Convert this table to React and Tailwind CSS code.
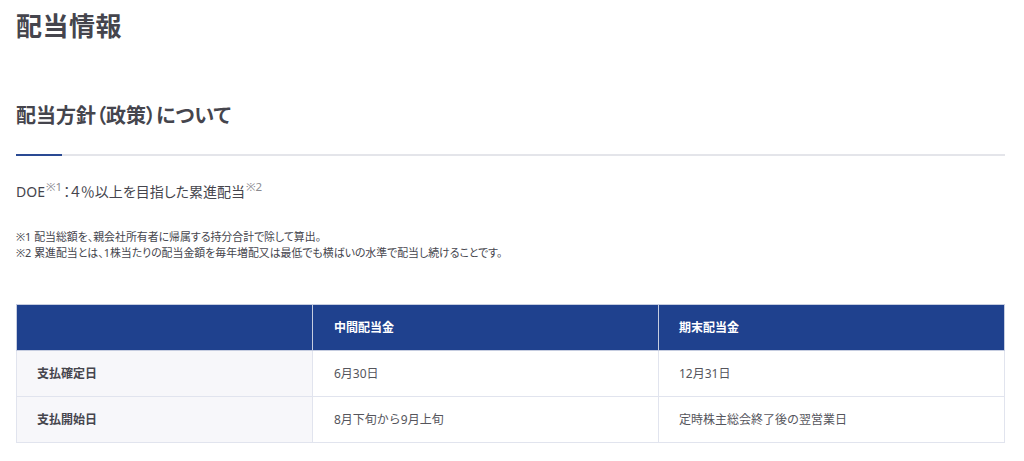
const FONT = { fontFamily: '"Noto Sans", "Noto Sans CJK JP", sans-serif' };

const ROWS = [
  { label: '支払確定日', mid: '6月30日', end: '12月31日' },
  { label: '支払開始日', mid: '8月下旬から9月上旬', end: '定時株主総会終了後の翌営業日' },
];

export default function App() {
  return (
    <div className="w-[1024px] h-[461px] bg-white text-[#3f3f46] px-4 overflow-hidden" style={FONT}>
      <h1 className="pt-[9px] text-[26px] leading-[34px] font-bold text-[#45454d] tracking-[0.5px]">配当情報</h1>

      <h2 className="mt-[58px] text-[20px] leading-[30px] font-bold text-[#45454d] [font-feature-settings:'palt']">
        配当方針（政策）について
      </h2>

      <div className="mt-[23px] flex w-[989px] h-[2px]">
        <div className="w-[46px] bg-[#2a4a93]" />
        <div className="flex-1 bg-[#e4e5ea]" />
      </div>

      <p className="mt-[26px] text-[14px] leading-[20px] text-[#45454d] [font-feature-settings:'palt']">
        DOE<sup className="text-[11.5px] text-[#8a8a90] px-[1px]">※1</sup>：４％以上を目指した累進配当
        <sup className="text-[11.5px] text-[#8a8a90] px-[1px]">※2</sup>
      </p>

      <div className="mt-[27px] text-[10.9px] leading-[16px] text-[#45454d] [font-feature-settings:'palt']">
        <p>※1 配当総額を、親会社所有者に帰属する持分合計で除して算出。</p>
        <p>※2 累進配当とは、1株当たりの配当金額を毎年増配又は最低でも横ばいの水準で配当し続けることです。</p>
      </div>

      <table className="mt-[43px] w-[989px] border-collapse text-[12px] table-fixed">
        <colgroup>
          <col className="w-[296px]" />
          <col className="w-[346px]" />
          <col />
        </colgroup>
        <thead>
          <tr className="h-[46px] bg-[#1f418e] text-white font-bold text-left">
            <th className="border border-[#c6cde0]" />
            <th className="border border-[#c6cde0] px-[21px] font-bold">中間配当金</th>
            <th className="border border-[#c6cde0] px-[20px] font-bold">期末配当金</th>
          </tr>
        </thead>
        <tbody>
          {ROWS.map((r) => (
            <tr key={r.label} className="h-[46px]">
              <td className="border border-[#e1e4ee] bg-[#f7f7fa] px-[20px] font-bold text-[#45454d]">{r.label}</td>
              <td className="border border-[#e1e4ee] px-[21px] text-[#55555c]">{r.mid}</td>
              <td className="border border-[#e1e4ee] px-[20px] text-[#55555c]">{r.end}</td>
            </tr>
          ))}
        </tbody>
      </table>
    </div>
  );
}
